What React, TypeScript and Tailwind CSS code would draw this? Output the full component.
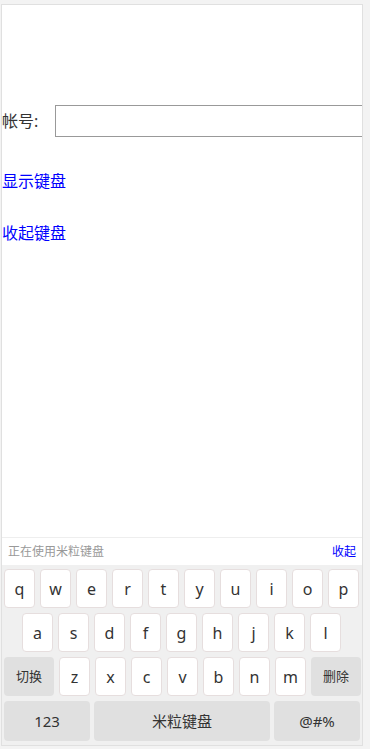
const font = { fontFamily: '"Noto Sans", "Noto Sans CJK SC", sans-serif' };

const row1 = ['q', 'w', 'e', 'r', 't', 'y', 'u', 'i', 'o', 'p'];
const row2 = ['a', 's', 'd', 'f', 'g', 'h', 'j', 'k', 'l'];
const row3 = ['z', 'x', 'c', 'v', 'b', 'n', 'm'];

function Key({ label }: { label: string }) {
  return (
    <div className="w-[31px] h-[39px] flex items-center justify-center bg-white border border-[#e6dede] rounded-[4px] text-[16px] text-[#333]">
      {label}
    </div>
  );
}

function FnKey({ label, className }: { label: string; className: string }) {
  return (
    <div className={`h-[39px] flex items-center justify-center bg-[#e0e0e0] rounded-[4px] text-[#333] ${className}`}>
      {label}
    </div>
  );
}

export default function App() {
  return (
    <div className="w-[370px] h-[749px] bg-[#f3f3f3] pt-[4px] pl-[1px]" style={font}>
      <div className="w-[362px] h-[742px] bg-white border border-[#e0e0e0] flex flex-col overflow-hidden">
        <div className="flex-1">
          <div className="mt-[100px] flex items-center h-[32px]">
            <span className="text-[16px] text-[#333] w-[53px]">帐号:</span>
            <div className="flex-1 h-[32px] border border-[#999] -mr-[4px]"></div>
          </div>
          <div className="mt-[33px] text-[16px] leading-[22px] text-[#0000ff]">显示键盘</div>
          <div className="mt-[30px] text-[16px] leading-[22px] text-[#0000ff]">收起键盘</div>
        </div>
        <div className="border-t border-[#eeeeee] h-[28px] flex items-center justify-between pl-[6px] pr-[6px] text-[12px]">
          <span className="text-[#999]">正在使用米粒键盘</span>
          <span className="text-[#0000ff]">收起</span>
        </div>
        <div className="bg-[#f0f0f0] pt-[4px] pb-[4px] flex flex-col gap-[5px]">
          <div className="flex gap-[5px] pl-[2px]">
            {row1.map((k) => (
              <Key key={k} label={k} />
            ))}
          </div>
          <div className="flex gap-[5px] pl-[20px]">
            {row2.map((k) => (
              <Key key={k} label={k} />
            ))}
          </div>
          <div className="flex gap-[5px] pl-[2px]">
            <FnKey label="切换" className="w-[50px] text-[13px]" />
            {row3.map((k) => (
              <Key key={k} label={k} />
            ))}
            <FnKey label="删除" className="w-[50px] text-[13px]" />
          </div>
          <div className="flex justify-center gap-[4px]">
            <FnKey label="123" className="w-[86px] text-[15px] h-[40px]" />
            <FnKey label="米粒键盘" className="w-[176px] text-[15px] h-[40px]" />
            <FnKey label="@#%" className="w-[86px] text-[15px] h-[40px]" />
          </div>
        </div>
      </div>
    </div>
  );
}
